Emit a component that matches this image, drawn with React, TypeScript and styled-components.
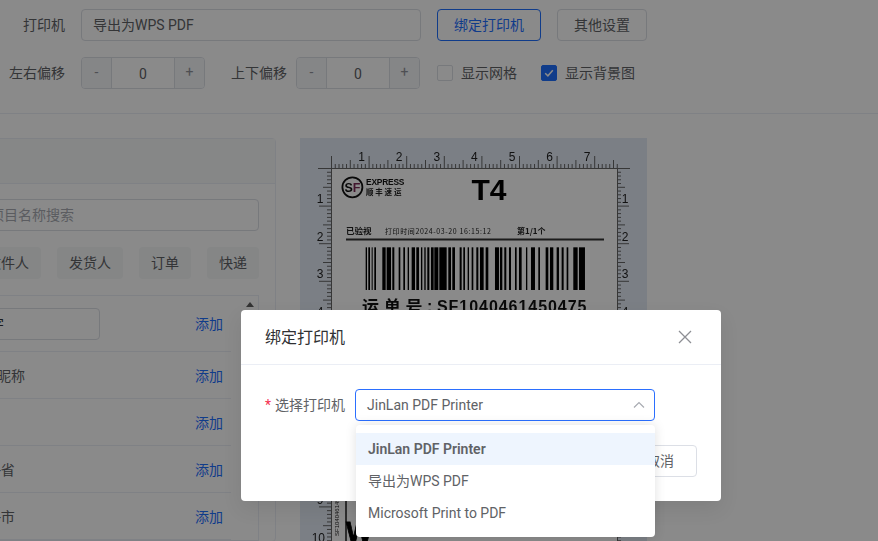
import React from 'react';
import styled, { createGlobalStyle } from 'styled-components';

const GlobalStyle = createGlobalStyle`
  html, body {
    margin: 0;
    padding: 0;
    background: #fff;
  }
  * {
    box-sizing: border-box;
  }
  body {
    font-family: Roboto, "Noto Sans CJK SC", sans-serif;
    font-size: 14px;
    color: #606266;
  }
`;

const RULER_UNIT = 37.6;
const RULER_TICKS = Array.from({ length: 110 }, (_, i) => i);
const BARS = [
  [212, 216], [220, 225], [230, 233], [238, 243], [262, 272], [275, 288], [292, 298], [311, 316],
  [325, 330], [338, 342], [350, 360], [364, 372], [378, 382], [388, 392], [397, 403], [408, 416],
  [418, 430], [433, 455], [460, 468], [472, 480], [494, 500], [505, 510], [518, 522], [530, 535],
  [544, 550], [555, 566], [572, 580], [600, 612], [615, 622], [628, 634], [642, 648], [660, 665],
  [672, 680], [693, 697], [708, 720], [730, 735], [752, 760], [765, 775], [785, 792], [800, 806],
  [815, 820], [835, 848], [852, 870],
];

const tickSize = (i: number) => (i % 10 === 0 ? 12 : i % 5 === 0 ? 8 : 4);

const LabelPreview = () => (
  <PreviewSvg viewBox="0 0 347 403" width="347" height="403">
    <rect width="347" height="403" fill="#e4ebf6" />
    <rect x="31" y="30" width="286" height="373" fill="#fff" />

    <g stroke="#666" strokeWidth="1">
      <line x1="18" y1="30.5" x2="330" y2="30.5" />
      <line x1="31.5" y1="18" x2="31.5" y2="403" />
      <line x1="317.5" y1="30" x2="317.5" y2="403" />
      {RULER_TICKS.slice(0, 77).map((i) => {
        const x = 31.5 + (i * RULER_UNIT) / 10;
        return <line key={`t${i}`} x1={x} y1={30} x2={x} y2={30 - tickSize(i)} />;
      })}
      {RULER_TICKS.map((i) => {
        const y = 30.5 + (i * RULER_UNIT) / 10;
        return (
          <g key={`s${i}`}>
            <line x1={31} y1={y} x2={31 - tickSize(i)} y2={y} />
            <line x1={317} y1={y} x2={317 + tickSize(i)} y2={y} />
          </g>
        );
      })}
    </g>

    <g fontFamily="'Liberation Sans', sans-serif" fontSize="12" fill="#222">
      {[1, 2, 3, 4, 5, 6, 7].map((n) => (
        <text key={`n${n}`} x={24 + n * RULER_UNIT} y={23} textAnchor="middle">{n}</text>
      ))}
      {[1, 2, 3, 4, 9, 10].map((n) => (
        <g key={`v${n}`}>
          <text x={n === 10 ? 25 : 20} y={27.5 + n * RULER_UNIT} textAnchor={n === 10 ? 'end' : 'middle'}>{n}</text>
          {n < 5 && <text x={325} y={27.5 + n * RULER_UNIT} textAnchor="middle">{n}</text>}
        </g>
      ))}
    </g>

    <circle cx="52.4" cy="49.3" r="10" fill="none" stroke="#111" strokeWidth="1.8" />
    <text x="44.5" y="54" fontFamily="'Liberation Sans', sans-serif" fontWeight="700" fontSize="12.5" fill="#111">S<tspan fill="#7a2a55">F</tspan></text>
    <text x="66" y="47" fontFamily="'Liberation Sans', sans-serif" fontWeight="700" fontSize="8.4" fill="#111" letterSpacing="-0.2">EXPRESS</text>
    <text x="66" y="56.5" fontFamily="'Noto Sans CJK SC', sans-serif" fontWeight="700" fontSize="7.5" fill="#222" letterSpacing="1.8">顺丰速运</text>
    <text x="189" y="62" textAnchor="middle" fontFamily="'Liberation Sans', sans-serif" fontWeight="700" fontSize="30" fill="#000">T4</text>

    <g fontFamily="'Noto Sans CJK SC', sans-serif" fill="#222">
      <text x="46" y="96" fontWeight="700" fontSize="8.5">已验视</text>
      <text x="85" y="96" fontSize="7" letterSpacing="0.6">打印时间2024-03-20 16:15:12</text>
      <text x="217" y="96" fontWeight="700" fontSize="8">第1/1个</text>
    </g>
    <rect x="46" y="100.5" width="258" height="2" fill="#333" />

    <g transform="translate(-5 -8) scale(0.3333)" fill="#000">
      {BARS.map(([a, b]) => (
        <rect key={a} x={a} y={352} width={b - a} height={128} />
      ))}
    </g>

    <text x="62" y="175" fontFamily="'Noto Sans CJK SC', sans-serif" fontWeight="700" fontSize="17" fill="#111" letterSpacing="4.7">运单号</text>
    <text x="127" y="174" fontFamily="'Liberation Sans', sans-serif" fontWeight="700" fontSize="16" fill="#111">:</text>
    <text x="137" y="174" fontFamily="'Liberation Sans', sans-serif" fontWeight="700" fontSize="16" fill="#111" letterSpacing="0.95">SF1040461450475</text>

    <rect x="45" y="355" width="2" height="48" fill="#555" />
    <text transform="translate(39 398) rotate(-90)" fontFamily="'Liberation Sans', sans-serif" fontSize="6" fill="#222">SF1040461450475</text>
    <text x="46" y="403" fontFamily="'Liberation Sans', sans-serif" fontWeight="700" fontSize="28" fill="#000" stroke="#000" strokeWidth="0.8">W</text>
  </PreviewSvg>
);

const fields = ['收件人昵称', '收件人', '收件人-省', '收件人-市'];

const App = () => (
  <Page>
    <GlobalStyle />
    <Toolbar>
      <ToolRow>
        <FieldLabel>打印机</FieldLabel>
        <PrinterInput>导出为WPS PDF</PrinterInput>
        <OutlineButton $primary>绑定打印机</OutlineButton>
        <OutlineButton>其他设置</OutlineButton>
      </ToolRow>
      <ToolRow>
        <FieldLabel>左右偏移</FieldLabel>
        <Stepper>
          <StepButton>-</StepButton>
          <StepValue>0</StepValue>
          <StepButton>+</StepButton>
        </Stepper>
        <OffsetLabel>上下偏移</OffsetLabel>
        <Stepper>
          <StepButton>-</StepButton>
          <StepValue>0</StepValue>
          <StepButton>+</StepButton>
        </Stepper>
        <CheckGroup>
          <CheckItem>
            <CheckBox />
            <CheckText>显示网格</CheckText>
          </CheckItem>
          <CheckItem>
            <CheckBox $checked>
              <svg width="12" height="12" viewBox="0 0 12 12" fill="none">
                <path d="M2.2 6.2 4.9 8.8 9.8 3.2" stroke="#fff" strokeWidth="1.5" />
              </svg>
            </CheckBox>
            <CheckText>显示背景图</CheckText>
          </CheckItem>
        </CheckGroup>
      </ToolRow>
    </Toolbar>

    <Main>
      <FieldPanel>
        <PanelHeader />
        <PanelBody>
          <SearchBox>请输入项目名称搜索</SearchBox>
          <TagRow>
            <Tag>收件人</Tag>
            <Tag>发货人</Tag>
            <Tag>订单</Tag>
            <Tag>快递</Tag>
          </TagRow>
          <FieldList>
            <FieldRows>
              <FieldRow $tall>
                <RowInput>固定字</RowInput>
                <AddLink>添加</AddLink>
              </FieldRow>
              {fields.map((name) => (
                <FieldRow key={name}>
                  <span>{name}</span>
                  <AddLink>添加</AddLink>
                </FieldRow>
              ))}
            </FieldRows>
            <ScrollGutter>
              <ScrollArrow />
            </ScrollGutter>
          </FieldList>
        </PanelBody>
      </FieldPanel>
      <LabelPreview />
    </Main>

    <Overlay>
      <Modal>
        <ModalHeader>
          <ModalTitle>绑定打印机</ModalTitle>
          <svg width="14" height="14" viewBox="0 0 14 14" fill="none">
            <path d="M1 1 13 13M13 1 1 13" stroke="#8d8f94" strokeWidth="1.3" />
          </svg>
        </ModalHeader>
        <ModalBody>
          <FormLine>
            <FormLabel>
              <Required>*</Required>选择打印机
            </FormLabel>
            <SelectWrap>
              <SelectBox>
                JinLan PDF Printer
                <svg width="12" height="8" viewBox="0 0 12 8" fill="none">
                  <path d="M1 6.5 6 1.5 11 6.5" stroke="#a8abb2" strokeWidth="1.2" />
                </svg>
              </SelectBox>
              <Dropdown>
                <Option $active>JinLan PDF Printer</Option>
                <Option $cjk>导出为WPS PDF</Option>
                <Option>Microsoft Print to PDF</Option>
              </Dropdown>
            </SelectWrap>
          </FormLine>
          <ModalFooter>
            <CancelButton>取消</CancelButton>
          </ModalFooter>
        </ModalBody>
      </Modal>
    </Overlay>
  </Page>
);

const Page = styled.div`
  position: relative;
  width: 878px;
  height: 541px;
  overflow: hidden;
  background: #fff;
`;

const Toolbar = styled.div`
  display: flex;
  flex-direction: column;
  gap: 16px;
  height: 114px;
  padding-top: 9px;
  border-bottom: 1px solid #ebeef5;
`;

const ToolRow = styled.div`
  display: flex;
  align-items: center;
  height: 32px;
`;

const FieldLabel = styled.label`
  width: 65px;
  margin-right: 16px;
  padding-bottom: 2px;
  text-align: right;
`;

const OffsetLabel = styled.label`
  margin: 0 9px 0 26px;
  padding-bottom: 2px;
`;

const PrinterInput = styled.div`
  display: flex;
  align-items: center;
  width: 340px;
  height: 32px;
  margin-right: 16px;
  padding: 0 11px 2px;
  border: 1px solid #dcdfe6;
  border-radius: 4px;
`;

const OutlineButton = styled.button<{ $primary?: boolean }>`
  height: 32px;
  margin-right: 16px;
  padding: 0 16px 2px;
  background: #fff;
  border: 1px solid ${(props) => (props.$primary ? '#1f6fff' : '#dcdfe6')};
  border-radius: 4px;
  color: ${(props) => (props.$primary ? '#1f6fff' : '#606266')};
  font: inherit;
`;

const Stepper = styled.div`
  display: grid;
  grid-template-columns: 29px 1fr 29px;
  width: 124px;
  height: 32px;
  border: 1px solid #dcdfe6;
  border-radius: 4px;
  overflow: hidden;
`;

const StepButton = styled.div`
  display: flex;
  align-items: center;
  justify-content: center;
  padding-bottom: 2px;
  background: #f5f7fa;
  color: #909399;
`;

const StepValue = styled.div`
  display: flex;
  align-items: center;
  justify-content: center;
  padding-top: 2px;
  border-left: 1px solid #dcdfe6;
  border-right: 1px solid #dcdfe6;
`;

const CheckGroup = styled.div`
  display: flex;
  gap: 24px;
  margin-left: 17px;
`;

const CheckItem = styled.label`
  display: flex;
  align-items: center;
  gap: 8px;
`;

const CheckText = styled.span`
  padding-bottom: 2px;
`;

const CheckBox = styled.span<{ $checked?: boolean }>`
  display: flex;
  align-items: center;
  justify-content: center;
  width: 16px;
  height: 16px;
  background: ${(props) => (props.$checked ? '#1f6fff' : '#fff')};
  border: 1px solid ${(props) => (props.$checked ? '#1f6fff' : '#dcdfe6')};
  border-radius: 2px;
`;

const Main = styled.div`
  display: flex;
  align-items: flex-start;
  gap: 24px;
  margin-left: -81px;
  padding-top: 24px;
`;

const FieldPanel = styled.div`
  flex: none;
  width: 357px;
  border: 1px solid #ebeef5;
  border-radius: 4px;
`;

const PanelHeader = styled.div`
  height: 45px;
  background: #f8faf9;
  border-bottom: 1px solid #ebeef5;
`;

const PanelBody = styled.div`
  display: flex;
  flex-direction: column;
  gap: 16px;
  padding: 15px 16px 0;
`;

const SearchBox = styled.div`
  display: flex;
  align-items: center;
  height: 32px;
  padding: 0 11px 2px;
  border: 1px solid #dcdfe6;
  border-radius: 4px;
  color: #a8abb2;
`;

const TagRow = styled.div`
  display: flex;
  justify-content: flex-end;
  gap: 16px;
`;

const Tag = styled.div`
  display: flex;
  align-items: center;
  height: 32px;
  padding: 0 12px 2px;
  background: #f5f7f8;
  border-radius: 4px;
`;

const FieldList = styled.div`
  display: flex;
  border: 1px solid #ebeef5;
`;

const FieldRows = styled.div`
  flex: 1;
  margin-right: 10px;
`;

const AddLink = styled.a`
  color: #1f6fff;
`;

const FieldRow = styled.div<{ $tall?: boolean }>`
  display: flex;
  align-items: center;
  justify-content: space-between;
  height: ${(props) => (props.$tall ? '56px' : '47px')};
  padding: 0 8px 0 18px;
  border-bottom: 1px solid #ebeef5;

  ${AddLink} {
    margin-bottom: ${(props) => (props.$tall ? '2px' : '0')};
  }
`;

const RowInput = styled.div`
  display: flex;
  align-items: center;
  width: 145px;
  height: 32px;
  padding: 0 6px 2px;
  border: 1px solid #dcdfe6;
  border-radius: 4px;
  color: #303133;
`;

const ScrollGutter = styled.div`
  display: flex;
  justify-content: center;
  flex: none;
  width: 17px;
  padding-top: 6px;
`;

const ScrollArrow = styled.div`
  width: 0;
  height: 0;
  border-left: 4.5px solid transparent;
  border-right: 4.5px solid transparent;
  border-bottom: 5px solid #5f5f5f;
`;

const PreviewSvg = styled.svg`
  display: block;
  flex: none;
  filter: blur(0.45px);
`;

const Overlay = styled.div`
  position: absolute;
  inset: 0;
  padding: 310px 0 0 241px;
  background: rgba(0, 0, 0, 0.46);
`;

const Modal = styled.div`
  width: 480px;
  height: 191px;
  background: #fff;
  border-radius: 4px;
  box-shadow: 0 8px 20px rgba(0, 0, 0, 0.08);
`;

const ModalHeader = styled.div`
  display: flex;
  align-items: center;
  justify-content: space-between;
  height: 55px;
  padding: 0 29px 0 24px;
  border-bottom: 1px solid #ebeef5;
`;

const ModalTitle = styled.div`
  padding-bottom: 2px;
  font-size: 16px;
  color: #303133;
`;

const ModalBody = styled.div`
  padding: 24px 24px 0;
`;

const FormLine = styled.div`
  display: flex;
  align-items: center;
`;

const FormLabel = styled.label`
  width: 90px;
  flex: none;
  padding-bottom: 2px;
  white-space: nowrap;
`;

const Required = styled.span`
  margin-right: 4px;
  color: #f5304f;
`;

const SelectWrap = styled.div`
  position: relative;
  width: 300px;
`;

const SelectBox = styled.div`
  display: flex;
  align-items: center;
  justify-content: space-between;
  height: 32px;
  padding: 0 9px 0 11px;
  border: 1px solid #2b6fff;
  border-radius: 4px;
`;

const Dropdown = styled.div`
  position: absolute;
  z-index: 2;
  top: 36px;
  left: 1px;
  width: 299px;
  padding: 8px 0;
  background: #fff;
  border-radius: 4px;
  box-shadow: 0 0 12px rgba(0, 0, 0, 0.12);
`;

const Option = styled.div<{ $active?: boolean; $cjk?: boolean }>`
  display: flex;
  align-items: center;
  height: 32px;
  padding: 0 12px ${(props) => (props.$cjk ? '2px' : '0')};
  background: ${(props) => (props.$active ? '#eef5fe' : '#fff')};
  font-weight: ${(props) => (props.$active ? 600 : 400)};
`;

const ModalFooter = styled.div`
  display: flex;
  justify-content: flex-end;
  margin-top: 24px;
`;

const CancelButton = styled.button`
  height: 32px;
  padding: 0 22px 2px;
  background: #fff;
  border: 1px solid #dcdfe6;
  border-radius: 4px;
  color: #606266;
  font: inherit;
`;

export default App;
